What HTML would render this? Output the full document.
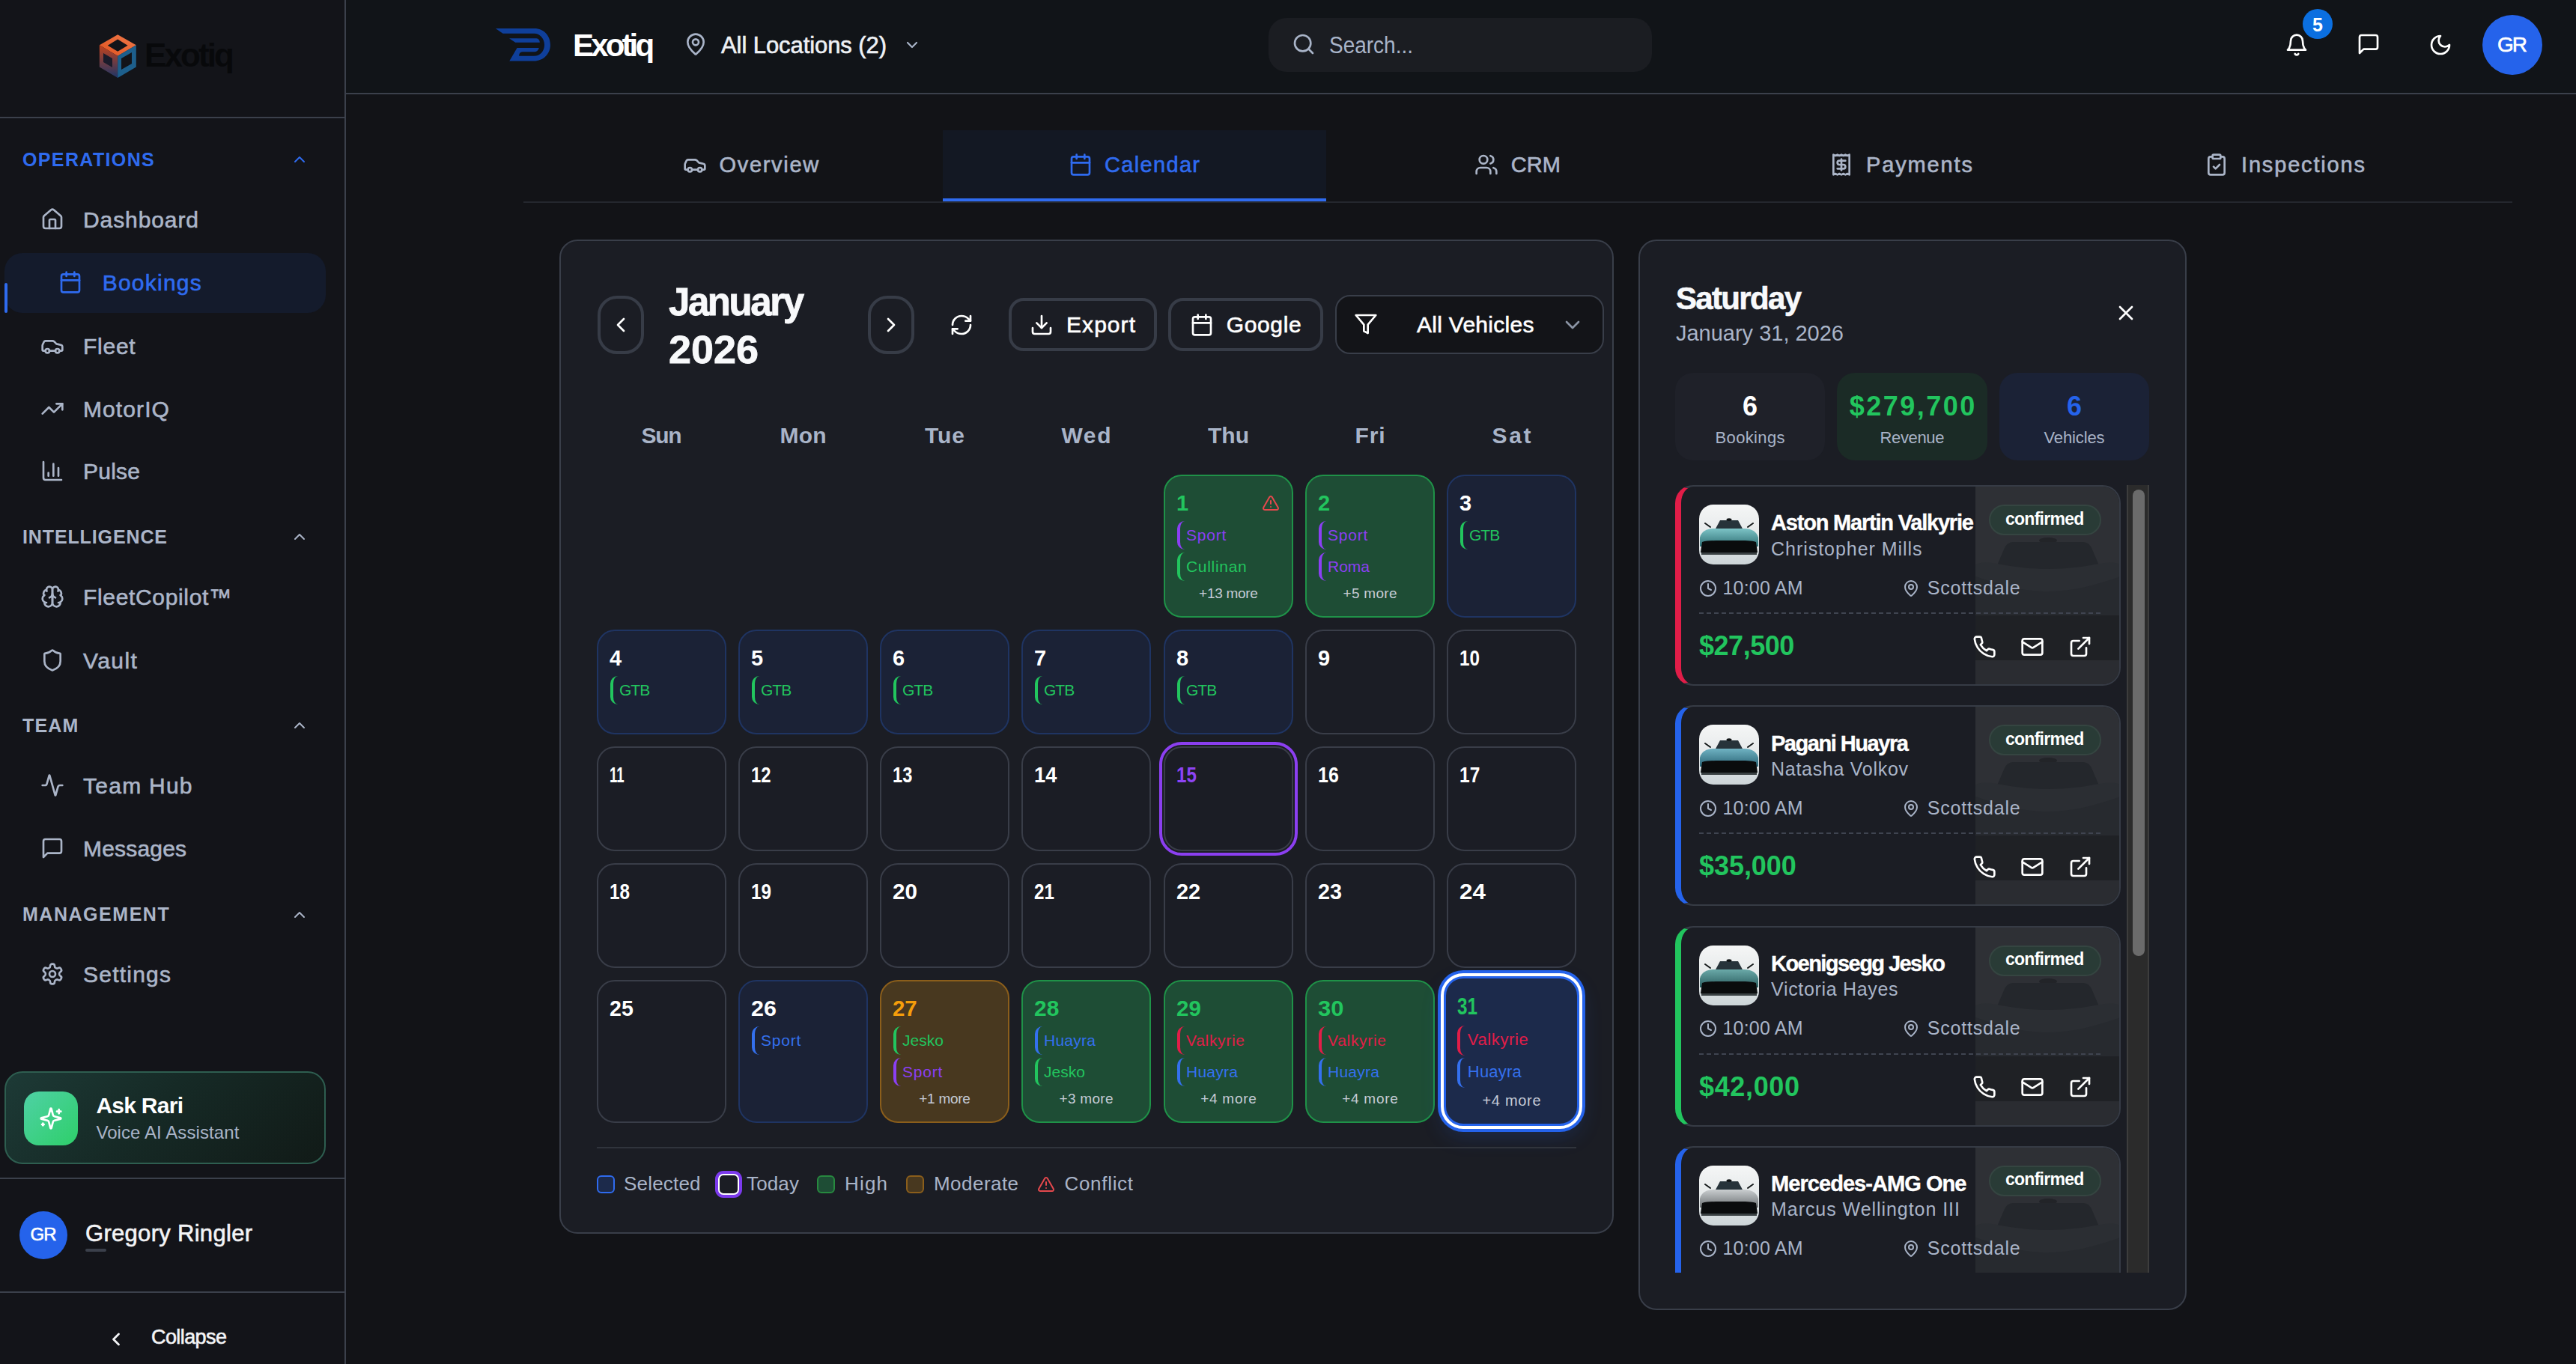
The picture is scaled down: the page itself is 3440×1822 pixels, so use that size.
<!DOCTYPE html>
<html><head><meta charset="utf-8">
<style>
*{box-sizing:border-box;margin:0;padding:0}
html,body{width:3440px;height:1822px;overflow:hidden;background:#121317;font-family:"Liberation Sans",sans-serif;color:#f3f4f6;position:relative}
.abs{position:absolute}
svg{position:absolute;fill:none;stroke:currentColor;stroke-linecap:round;stroke-linejoin:round}
.t{position:absolute;white-space:nowrap;line-height:1}
</style></head><body>
<div class="abs" style="left:0;top:0;width:462px;height:1822px;background:#131419;border-right:2px solid #3b404b"></div>
<svg style="left:130px;top:44px;width:56px;height:62px;stroke:none" viewBox="130 44 56 62">
<defs>
<linearGradient id="cgl" x1="0" y1="0" x2="0" y2="1"><stop offset="0" stop-color="#c2421d"/><stop offset="1" stop-color="#1e3566"/></linearGradient>
<linearGradient id="cgt" x1="0" y1="1" x2="1" y2="0"><stop offset="0" stop-color="#e0521f"/><stop offset="1" stop-color="#f07a4a"/></linearGradient>
</defs>
<polygon points="157.2,46.2 181.8,60.3 157.2,74.7 132.8,60.3" fill="url(#cgt)"/>
<polygon points="157.2,52.5 170.5,60.8 157.2,68.8 143.8,60.8" fill="#131419"/>
<polygon points="132.8,60.3 157.2,74.7 157.2,103.9 132.8,89.5" fill="url(#cgl)"/>
<polygon points="157.2,74.7 181.8,60.3 181.8,89.5 157.2,103.9" fill="#1d5f8c"/>
<polygon points="162,78 176,70 176,85 162,93" fill="#131419"/>
<polygon points="138,71 150,78 150,90 138,83" fill="#1a1b2a"/>
</svg>
<div class="t " style="left:193.0px;top:52.3px;font-size:44px;color:#08090b;font-weight:bold;letter-spacing:-2.90px;">Exotiq</div>
<div class="abs" style="left:0px;top:156px;width:460px;height:2px;background:#3b404b"></div>
<div class="t " style="left:30.0px;top:200.5px;font-size:25px;color:#2f6bef;font-weight:bold;letter-spacing:1.37px;">OPERATIONS</div>
<svg style="left:388px;top:200.7px;width:24px;height:24px;color:#2f6bef;" viewBox="0 0 24 24" stroke-width="2"><path d="m18 15-6-6-6 6"/></svg>
<div class="t " style="left:30.0px;top:704.8px;font-size:25px;color:#abb5c8;font-weight:bold;letter-spacing:0.88px;">INTELLIGENCE</div>
<svg style="left:388px;top:705px;width:24px;height:24px;color:#abb5c8;" viewBox="0 0 24 24" stroke-width="2"><path d="m18 15-6-6-6 6"/></svg>
<div class="t " style="left:30.0px;top:956.8px;font-size:25px;color:#abb5c8;font-weight:bold;letter-spacing:1.20px;">TEAM</div>
<svg style="left:388px;top:957px;width:24px;height:24px;color:#abb5c8;" viewBox="0 0 24 24" stroke-width="2"><path d="m18 15-6-6-6 6"/></svg>
<div class="t " style="left:30.0px;top:1209.4px;font-size:25px;color:#abb5c8;font-weight:bold;letter-spacing:1.53px;">MANAGEMENT</div>
<svg style="left:388px;top:1209.6px;width:24px;height:24px;color:#abb5c8;" viewBox="0 0 24 24" stroke-width="2"><path d="m18 15-6-6-6 6"/></svg>
<div class="abs" style="left:6px;top:338px;width:429px;height:80px;background:#141b2c;border-radius:24px"></div>
<div class="abs" style="left:6px;top:378px;width:4px;height:40px;background:#2f6bef;border-radius:2px"></div>
<svg style="left:54px;top:276.5px;width:32px;height:32px;color:#abb5c8;" viewBox="0 0 24 24" stroke-width="2"><path d="M15 21v-8a1 1 0 0 0-1-1h-4a1 1 0 0 0-1 1v8"/><path d="M3 10a2 2 0 0 1 .709-1.528l7-5.999a2 2 0 0 1 2.582 0l7 5.999A2 2 0 0 1 21 10v9a2 2 0 0 1-2 2H5a2 2 0 0 1-2-2z"/></svg>
<div class="t " style="left:111.0px;top:278.6px;font-size:30px;color:#abb5c8;letter-spacing:0.90px;-webkit-text-stroke:0.6px currentColor;">Dashboard</div>
<svg style="left:78px;top:360.5px;width:32px;height:32px;color:#2f6bef;" viewBox="0 0 24 24" stroke-width="2"><path d="M8 2v4"/><path d="M16 2v4"/><rect width="18" height="18" x="3" y="4" rx="2"/><path d="M3 10h18"/></svg>
<div class="t " style="left:136.7px;top:362.6px;font-size:30px;color:#2f6bef;letter-spacing:1.23px;-webkit-text-stroke:0.6px currentColor;">Bookings</div>
<svg style="left:54px;top:445.5px;width:32px;height:32px;color:#abb5c8;" viewBox="0 0 24 24" stroke-width="2"><path d="M19 17h2c.6 0 1-.4 1-1v-3c0-.9-.7-1.7-1.5-1.9C18.7 10.6 16 10 16 10s-1.3-1.4-2.2-2.3c-.5-.4-1.1-.7-1.8-.7H5c-.6 0-1.1.4-1.4.9l-1.4 2.9A3.7 3.7 0 0 0 2 12v4c0 .6.4 1 1 1h2"/><circle cx="7" cy="17" r="2"/><path d="M9 17h6"/><circle cx="17" cy="17" r="2"/></svg>
<div class="t " style="left:111.0px;top:447.6px;font-size:30px;color:#abb5c8;letter-spacing:0.75px;-webkit-text-stroke:0.6px currentColor;">Fleet</div>
<svg style="left:54px;top:529.5px;width:32px;height:32px;color:#abb5c8;" viewBox="0 0 24 24" stroke-width="2"><polyline points="22 7 13.5 15.5 8.5 10.5 2 17"/><polyline points="16 7 22 7 22 13"/></svg>
<div class="t " style="left:111.0px;top:531.6px;font-size:30px;color:#abb5c8;letter-spacing:1.10px;-webkit-text-stroke:0.6px currentColor;">MotorIQ</div>
<svg style="left:54px;top:612.5px;width:32px;height:32px;color:#abb5c8;" viewBox="0 0 24 24" stroke-width="2"><path d="M3 3v16a2 2 0 0 0 2 2h16"/><path d="M18 17V9"/><path d="M13 17V5"/><path d="M8 17v-3"/></svg>
<div class="t " style="left:111.0px;top:614.6px;font-size:30px;color:#abb5c8;letter-spacing:0.25px;-webkit-text-stroke:0.6px currentColor;">Pulse</div>
<svg style="left:54px;top:781.2px;width:32px;height:32px;color:#abb5c8;" viewBox="0 0 24 24" stroke-width="2"><path d="M12 5a3 3 0 1 0-5.997.125 4 4 0 0 0-2.526 5.77 4 4 0 0 0 .556 6.588A4 4 0 1 0 12 18Z"/><path d="M12 5a3 3 0 1 1 5.997.125 4 4 0 0 1 2.526 5.77 4 4 0 0 1-.556 6.588A4 4 0 1 1 12 18Z"/><path d="M15 13a4.5 4.5 0 0 1-3-4 4.5 4.5 0 0 1-3 4"/><path d="M17.599 6.5a3 3 0 0 0 .399-1.375"/><path d="M6.003 5.125A3 3 0 0 0 6.401 6.5"/><path d="M3.477 10.896a4 4 0 0 1 .585-.396"/><path d="M19.938 10.5a4 4 0 0 1 .585.396"/><path d="M6 18a4 4 0 0 1-1.967-.516"/><path d="M19.967 17.484A4 4 0 0 1 18 18"/></svg>
<div class="t " style="left:111.0px;top:783.3px;font-size:30px;color:#abb5c8;letter-spacing:0.66px;-webkit-text-stroke:0.6px currentColor;">FleetCopilot™</div>
<svg style="left:54px;top:865.5px;width:32px;height:32px;color:#abb5c8;" viewBox="0 0 24 24" stroke-width="2"><path d="M20 13c0 5-3.5 7.5-7.66 8.95a1 1 0 0 1-.67-.01C7.5 20.5 4 18 4 13V6a1 1 0 0 1 1-1c2 0 4.5-1.2 6.24-2.72a1.17 1.17 0 0 1 1.52 0C14.51 3.81 17 5 19 5a1 1 0 0 1 1 1z"/></svg>
<div class="t " style="left:111.0px;top:867.6px;font-size:30px;color:#abb5c8;letter-spacing:1.45px;-webkit-text-stroke:0.6px currentColor;">Vault</div>
<svg style="left:54px;top:1033.1px;width:32px;height:32px;color:#abb5c8;" viewBox="0 0 24 24" stroke-width="2"><path d="M22 12h-2.48a2 2 0 0 0-1.93 1.46l-2.35 8.36a.25.25 0 0 1-.48 0L9.24 2.18a.25.25 0 0 0-.48 0l-2.35 8.36A2 2 0 0 1 4.49 12H2"/></svg>
<div class="t " style="left:111.0px;top:1035.2px;font-size:30px;color:#abb5c8;letter-spacing:1.26px;-webkit-text-stroke:0.6px currentColor;">Team Hub</div>
<svg style="left:54px;top:1117.0px;width:32px;height:32px;color:#abb5c8;" viewBox="0 0 24 24" stroke-width="2"><path d="M21 15a2 2 0 0 1-2 2H7l-4 4V5a2 2 0 0 1 2-2h14a2 2 0 0 1 2 2z"/></svg>
<div class="t " style="left:111.0px;top:1119.1px;font-size:30px;color:#abb5c8;letter-spacing:0.19px;-webkit-text-stroke:0.6px currentColor;">Messages</div>
<svg style="left:54px;top:1284.9px;width:32px;height:32px;color:#abb5c8;" viewBox="0 0 24 24" stroke-width="2"><path d="M12.22 2h-.44a2 2 0 0 0-2 2v.18a2 2 0 0 1-1 1.73l-.43.25a2 2 0 0 1-2 0l-.15-.08a2 2 0 0 0-2.73.73l-.22.38a2 2 0 0 0 .73 2.73l.15.1a2 2 0 0 1 1 1.72v.51a2 2 0 0 1-1 1.74l-.15.09a2 2 0 0 0-.73 2.73l.22.38a2 2 0 0 0 2.730.73l.15-.08a2 2 0 0 1 2 0l.43.25a2 2 0 0 1 1 1.73V20a2 2 0 0 0 2 2h.44a2 2 0 0 0 2-2v-.18a2 2 0 0 1 1-1.73l.43-.25a2 2 0 0 1 2 0l.15.08a2 2 0 0 0 2.73-.73l.22-.39a2 2 0 0 0-.73-2.73l-.15-.08a2 2 0 0 1-1-1.74v-.5a2 2 0 0 1 1-1.74l.15-.09a2 2 0 0 0 .73-2.73l-.22-.38a2 2 0 0 0-2.73-.73l-.15.08a2 2 0 0 1-2 0l-.43-.25a2 2 0 0 1-1-1.73V4a2 2 0 0 0-2-2z"/><circle cx="12" cy="12" r="3"/></svg>
<div class="t " style="left:111.0px;top:1287.0px;font-size:30px;color:#abb5c8;letter-spacing:1.23px;-webkit-text-stroke:0.6px currentColor;">Settings</div>
<div class="abs" style="left:6px;top:1431px;width:429px;height:124px;background:linear-gradient(135deg,#1d3a36 0%,#162a26 45%,#111a17 100%);border:2px solid #2e5e50;border-radius:24px"></div>
<div class="abs" style="left:32px;top:1458px;width:72px;height:72px;background:linear-gradient(135deg,#4fd1a5 0%,#2ecf6a 100%);border-radius:20px"></div>
<svg style="left:52px;top:1477.5px;width:32px;height:32px;color:#ffffff;" viewBox="0 0 24 24" stroke-width="2"><path d="M9.937 15.5A2 2 0 0 0 8.5 14.063l-6.135-1.582a.5.5 0 0 1 0-.962L8.5 9.936A2 2 0 0 0 9.937 8.5l1.582-6.135a.5.5 0 0 1 .963 0L14.063 8.5A2 2 0 0 0 15.5 9.937l6.135 1.581a.5.5 0 0 1 0 .964L15.5 14.063a2 2 0 0 0-1.437 1.437l-1.582 6.135a.5.5 0 0 1-.963 0z"/><path d="M20 3v4"/><path d="M22 5h-4"/><path d="M4 17v2"/><path d="M5 18H3"/></svg>
<div class="t " style="left:128.4px;top:1462.1px;font-size:30px;color:#ffffff;font-weight:bold;letter-spacing:-0.73px;">Ask Rari</div>
<div class="t " style="left:128.4px;top:1500.7px;font-size:24px;color:#a9b4c8;letter-spacing:0.09px;">Voice AI Assistant</div>
<div class="abs" style="left:0px;top:1573px;width:460px;height:2px;background:#3b404b"></div>
<div class="abs" style="left:26px;top:1618px;width:64px;height:64px;background:#2563eb;border-radius:50%"></div>
<div class="t " style="left:40.5px;top:1637.3px;font-size:24px;color:#ffffff;letter-spacing:-1.00px;-webkit-text-stroke:0.6px currentColor;">GR</div>
<div class="t " style="left:114.0px;top:1632.3px;font-size:31px;color:#f3f4f6;letter-spacing:0.30px;-webkit-text-stroke:0.6px currentColor;">Gregory Ringler</div>
<div class="abs" style="left:114px;top:1668px;width:28px;height:4px;background:#3b404b;border-radius:2px"></div>
<div class="abs" style="left:0px;top:1725px;width:460px;height:2px;background:#3b404b"></div>
<svg style="left:140.6px;top:1774.5px;width:28px;height:28px;color:#f3f4f6;" viewBox="0 0 24 24" stroke-width="2.4"><path d="m15 18-6-6 6-6"/></svg>
<div class="t " style="left:202.0px;top:1773.1px;font-size:27px;color:#f3f4f6;letter-spacing:-0.59px;-webkit-text-stroke:0.6px currentColor;">Collapse</div>
<div class="abs" style="left:462px;top:0;width:2978px;height:126px;background:#111418;border-bottom:2px solid #3b404b"></div>
<svg style="left:655px;top:34px;width:86px;height:52px;stroke:none" viewBox="655 34 86 52">
<path fill-rule="evenodd" fill="#0f3f9a" d="M661.8 38.1 L713.6 38.1 C726.5 38.1 734.9 48 734.9 59.9 C734.9 72 725.5 81.4 713 81.4 L680.3 81.4 L690.5 64 L719.8 64 C718.8 67.5 716.5 69.2 713.5 69.2 L697.5 69.2 C694.5 69.2 693.2 72 693.2 74.8 L713 74.8 C721.5 74.8 727 68 727 59.9 C727 51 720.5 44.75 713.5 44.75 L671.5 44.75 Z"/>
<path fill="#0f3f9a" d="M680 51.2 L716.5 51.2 C719 51.2 720.8 54 720.8 56.8 L688.2 56.8 Z"/>
</svg>
<div class="t " style="left:765.0px;top:40.1px;font-size:42px;color:#ffffff;font-weight:bold;letter-spacing:-3.86px;">Exotiq</div>
<svg style="left:913px;top:43px;width:32px;height:32px;color:#a9b4c8;" viewBox="0 0 24 24" stroke-width="2"><path d="M20 10c0 4.993-5.539 10.193-7.399 11.799a1 1 0 0 1-1.202 0C9.539 20.193 4 14.993 4 10a8 8 0 0 1 16 0"/><circle cx="12" cy="10" r="3"/></svg>
<div class="t " style="left:963.0px;top:44.5px;font-size:31px;color:#eef1f5;letter-spacing:-0.08px;-webkit-text-stroke:0.6px currentColor;">All Locations (2)</div>
<svg style="left:1206px;top:48px;width:24px;height:24px;color:#a9b4c8;" viewBox="0 0 24 24" stroke-width="2.2"><path d="m6 9 6 6 6-6"/></svg>
<div class="abs" style="left:1694px;top:24px;width:512px;height:72px;background:#1b1d22;border-radius:24px"></div>
<svg style="left:1725px;top:43px;width:32px;height:32px;color:#a9b4c8;" viewBox="0 0 24 24" stroke-width="2"><circle cx="11" cy="11" r="8"/><path d="m21 21-4.3-4.3"/></svg>
<div class="t " style="left:1775.0px;top:44.6px;font-size:31px;color:#a9b4c8;transform:scaleX(0.9025);transform-origin:0.0px 0;">Search...</div>
<svg style="left:3051px;top:44px;width:32px;height:32px;color:#ffffff;" viewBox="0 0 24 24" stroke-width="2"><path d="M6 8a6 6 0 0 1 12 0c0 7 3 9 3 9H3s3-2 3-9"/><path d="M10.3 21a1.94 1.94 0 0 0 3.4 0"/></svg>
<div class="abs" style="left:3075px;top:12px;width:40px;height:40px;background:#0b6fe0;border-radius:50%"></div>
<div class="t " style="left:3088.1px;top:20.8px;font-size:25px;color:#ffffff;font-weight:bold;">5</div>
<svg style="left:3147px;top:43px;width:32px;height:32px;color:#ffffff;" viewBox="0 0 24 24" stroke-width="2"><path d="M21 15a2 2 0 0 1-2 2H7l-4 4V5a2 2 0 0 1 2-2h14a2 2 0 0 1 2 2z"/></svg>
<svg style="left:3243px;top:44px;width:32px;height:32px;color:#ffffff;" viewBox="0 0 24 24" stroke-width="2"><path d="M12 3a6 6 0 0 0 9 9 9 9 0 1 1-9-9Z"/></svg>
<div class="abs" style="left:3315px;top:20px;width:80px;height:80px;background:#2563eb;border-radius:50%"></div>
<div class="t " style="left:3335.0px;top:46.2px;font-size:28px;color:#ffffff;letter-spacing:-2.00px;-webkit-text-stroke:0.6px currentColor;">GR</div>
<div class="abs" style="left:699px;top:269px;width:2656px;height:2px;background:#24272e"></div>
<div class="abs" style="left:1259px;top:174px;width:512px;height:95px;background:#131823"></div>
<div class="abs" style="left:1259px;top:265px;width:512px;height:4px;background:#2f6bef"></div>
<svg style="left:912px;top:204px;width:32px;height:32px;color:#abb5c8;" viewBox="0 0 24 24" stroke-width="2"><path d="M19 17h2c.6 0 1-.4 1-1v-3c0-.9-.7-1.7-1.5-1.9C18.7 10.6 16 10 16 10s-1.3-1.4-2.2-2.3c-.5-.4-1.1-.7-1.8-.7H5c-.6 0-1.1.4-1.4.9l-1.4 2.9A3.7 3.7 0 0 0 2 12v4c0 .6.4 1 1 1h2"/><circle cx="7" cy="17" r="2"/><path d="M9 17h6"/><circle cx="17" cy="17" r="2"/></svg>
<div class="t " style="left:960.5px;top:206.0px;font-size:29px;color:#abb5c8;letter-spacing:1.69px;-webkit-text-stroke:0.6px currentColor;">Overview</div>
<svg style="left:1427px;top:204px;width:32px;height:32px;color:#2f6bef;" viewBox="0 0 24 24" stroke-width="2"><path d="M8 2v4"/><path d="M16 2v4"/><rect width="18" height="18" x="3" y="4" rx="2"/><path d="M3 10h18"/></svg>
<div class="t " style="left:1475.0px;top:206.0px;font-size:29px;color:#2f6bef;letter-spacing:1.33px;-webkit-text-stroke:0.6px currentColor;">Calendar</div>
<svg style="left:1969px;top:204px;width:32px;height:32px;color:#abb5c8;" viewBox="0 0 24 24" stroke-width="2"><path d="M16 21v-2a4 4 0 0 0-4-4H6a4 4 0 0 0-4 4v2"/><circle cx="9" cy="7" r="4"/><path d="M22 21v-2a4 4 0 0 0-3-3.87"/><path d="M16 3.13a4 4 0 0 1 0 7.75"/></svg>
<div class="t " style="left:2017.7px;top:206.0px;font-size:29px;color:#abb5c8;letter-spacing:0.15px;-webkit-text-stroke:0.6px currentColor;">CRM</div>
<svg style="left:2443px;top:204px;width:32px;height:32px;color:#abb5c8;" viewBox="0 0 24 24" stroke-width="2"><path d="M4 2v20l2-1 2 1 2-1 2 1 2-1 2 1 2-1 2 1V2l-2 1-2-1-2 1-2-1-2 1-2-1-2 1Z"/><path d="M16 8h-6a2 2 0 1 0 0 4h4a2 2 0 1 1 0 4H8"/><path d="M12 17.5v-11"/></svg>
<div class="t " style="left:2492.0px;top:206.0px;font-size:29px;color:#abb5c8;letter-spacing:1.87px;-webkit-text-stroke:0.6px currentColor;">Payments</div>
<svg style="left:2944px;top:204px;width:32px;height:32px;color:#abb5c8;" viewBox="0 0 24 24" stroke-width="2"><rect width="8" height="4" x="8" y="2" rx="1" ry="1"/><path d="M16 4h2a2 2 0 0 1 2 2v14a2 2 0 0 1-2 2H6a2 2 0 0 1-2-2V6a2 2 0 0 1 2-2h2"/><path d="m9 14 2 2 4-4"/></svg>
<div class="t " style="left:2993.0px;top:206.0px;font-size:29px;color:#abb5c8;letter-spacing:1.83px;-webkit-text-stroke:0.6px currentColor;">Inspections</div>
<div class="abs" style="left:747px;top:320px;width:1408px;height:1328px;background:#1b1d24;border:2px solid #393e49;border-radius:24px"></div>
<div class="abs" style="left:797.5px;top:395px;width:62px;height:78px;border:4px solid #373c47;border-radius:26px"></div>
<svg style="left:812.5px;top:418px;width:32px;height:32px;color:#ffffff;" viewBox="0 0 24 24" stroke-width="2"><path d="m15 18-6-6 6-6"/></svg>
<div class="abs" style="left:1159px;top:395px;width:62px;height:78px;border:4px solid #373c47;border-radius:26px"></div>
<svg style="left:1174px;top:418px;width:32px;height:32px;color:#ffffff;" viewBox="0 0 24 24" stroke-width="2"><path d="m9 18 6-6-6-6"/></svg>
<div class="t " style="left:893.0px;top:377.8px;font-size:51px;color:#f8f9fb;font-weight:bold;letter-spacing:-2.43px;-webkit-text-stroke:0.8px currentColor;">January</div>
<div class="t " style="left:893.0px;top:442.3px;font-size:51px;color:#f8f9fb;font-weight:bold;transform:scaleX(1.0573);transform-origin:0.0px 0;-webkit-text-stroke:0.8px currentColor;">2026</div>
<svg style="left:1267.5px;top:418px;width:32px;height:32px;color:#ffffff;" viewBox="0 0 24 24" stroke-width="2"><path d="M3 12a9 9 0 0 1 9-9 9.75 9.75 0 0 1 6.74 2.74L21 8"/><path d="M21 3v5h-5"/><path d="M21 12a9 9 0 0 1-9 9 9.75 9.75 0 0 1-6.74-2.74L3 16"/><path d="M8 16H3v5"/></svg>
<div class="abs" style="left:1347px;top:398px;width:198px;height:71px;border:4px solid #373c47;border-radius:20px"></div>
<svg style="left:1375px;top:417.5px;width:32px;height:32px;color:#ffffff;" viewBox="0 0 24 24" stroke-width="2"><path d="M21 15v4a2 2 0 0 1-2 2H5a2 2 0 0 1-2-2v-4"/><polyline points="7 10 12 15 17 10"/><line x1="12" x2="12" y1="15" y2="3"/></svg>
<div class="t " style="left:1424.0px;top:419.3px;font-size:30px;color:#ffffff;letter-spacing:1.06px;-webkit-text-stroke:0.6px currentColor;">Export</div>
<div class="abs" style="left:1560px;top:398px;width:207px;height:71px;border:4px solid #373c47;border-radius:20px"></div>
<svg style="left:1589px;top:417.5px;width:32px;height:32px;color:#ffffff;" viewBox="0 0 24 24" stroke-width="2"><path d="M8 2v4"/><path d="M16 2v4"/><rect width="18" height="18" x="3" y="4" rx="2"/><path d="M3 10h18"/></svg>
<div class="t " style="left:1637.7px;top:419.3px;font-size:30px;color:#ffffff;letter-spacing:0.66px;-webkit-text-stroke:0.6px currentColor;">Google</div>
<div class="abs" style="left:1783px;top:394px;width:359px;height:79px;background:#131418;border:2px solid #393e49;border-radius:20px"></div>
<svg style="left:1807.7px;top:417px;width:32px;height:32px;color:#ffffff;" viewBox="0 0 24 24" stroke-width="2"><polygon points="22 3 2 3 10 12.46 10 19 14 21 14 12.46 22 3"/></svg>
<div class="t " style="left:1892.0px;top:419.3px;font-size:30px;color:#ffffff;letter-spacing:0.27px;-webkit-text-stroke:0.6px currentColor;">All Vehicles</div>
<svg style="left:2083.5px;top:418px;width:32px;height:32px;color:#8a93a3;" viewBox="0 0 24 24" stroke-width="2"><path d="m6 9 6 6 6-6"/></svg>
<div class="t " style="left:856.5px;top:566.6px;font-size:30px;color:#a9b4c8;font-weight:bold;letter-spacing:-1.35px;">Sun</div>
<div class="t " style="left:1041.5px;top:566.6px;font-size:30px;color:#a9b4c8;font-weight:bold;letter-spacing:0.20px;">Mon</div>
<div class="t " style="left:1235.0px;top:566.6px;font-size:30px;color:#a9b4c8;font-weight:bold;letter-spacing:0.95px;">Tue</div>
<div class="t " style="left:1417.5px;top:566.6px;font-size:30px;color:#a9b4c8;font-weight:bold;letter-spacing:1.60px;">Wed</div>
<div class="t " style="left:1613.0px;top:566.6px;font-size:30px;color:#a9b4c8;font-weight:bold;">Thu</div>
<div class="t " style="left:1809.5px;top:566.6px;font-size:30px;color:#a9b4c8;font-weight:bold;letter-spacing:0.85px;">Fri</div>
<div class="t " style="left:1992.5px;top:566.6px;font-size:30px;color:#a9b4c8;font-weight:bold;letter-spacing:2.65px;">Sat</div>
<div class="abs" style="left:1554px;top:634px;width:173px;height:191px;background:#1e4d35;border:2px solid #1f9248;border-radius:24px"></div>
<div class="t " style="left:1571.0px;top:657.5px;font-size:29px;color:#22c55e;font-weight:bold;">1</div>
<div class="abs" style="left:1572px;top:696px;width:12px;height:38px;border-left:4px solid #8b3ff3;border-radius:10px 0 0 10px"></div>
<div class="t " style="left:1584.0px;top:704.2px;font-size:21px;color:#8b3ff3;letter-spacing:0.80px;">Sport</div>
<div class="abs" style="left:1572px;top:738px;width:12px;height:38px;border-left:4px solid #22c55e;border-radius:10px 0 0 10px"></div>
<div class="t " style="left:1584.0px;top:746.2px;font-size:21px;color:#22c55e;letter-spacing:0.70px;">Cullinan</div>
<div class="t " style="left:1601.1px;top:782.5px;font-size:19px;color:#c5cbd6;letter-spacing:-0.29px;">+13 more</div>
<svg style="left:1684.7px;top:660px;width:24px;height:24px;color:#e5484d;" viewBox="0 0 24 24" stroke-width="2"><path d="m21.73 18-8-14a2 2 0 0 0-3.48 0l-8 14A2 2 0 0 0 4 21h16a2 2 0 0 0 1.73-3"/><path d="M12 9v4"/><path d="M12 17h.01"/></svg>
<div class="abs" style="left:1743px;top:634px;width:173px;height:191px;background:#1e4d35;border:2px solid #1f9248;border-radius:24px"></div>
<div class="t " style="left:1760.0px;top:657.5px;font-size:29px;color:#22c55e;font-weight:bold;">2</div>
<div class="abs" style="left:1761px;top:696px;width:12px;height:38px;border-left:4px solid #8b3ff3;border-radius:10px 0 0 10px"></div>
<div class="t " style="left:1773.0px;top:704.2px;font-size:21px;color:#8b3ff3;letter-spacing:0.80px;">Sport</div>
<div class="abs" style="left:1761px;top:738px;width:12px;height:38px;border-left:4px solid #8b3ff3;border-radius:10px 0 0 10px"></div>
<div class="t " style="left:1773.0px;top:746.2px;font-size:21px;color:#8b3ff3;">Roma</div>
<div class="t " style="left:1793.5px;top:782.5px;font-size:19px;color:#c5cbd6;letter-spacing:0.30px;">+5 more</div>
<div class="abs" style="left:1932px;top:634px;width:173px;height:191px;background:#1b2236;border:2px solid #1f3462;border-radius:24px"></div>
<div class="t " style="left:1949.0px;top:657.5px;font-size:29px;color:#ffffff;font-weight:bold;">3</div>
<div class="abs" style="left:1950px;top:696px;width:12px;height:38px;border-left:4px solid #22c55e;border-radius:10px 0 0 10px"></div>
<div class="t " style="left:1962.0px;top:704.2px;font-size:21px;color:#22c55e;letter-spacing:-1.00px;">GTB</div>
<div class="abs" style="left:797px;top:841px;width:173px;height:140px;background:#1b2236;border:2px solid #1f3462;border-radius:24px"></div>
<div class="t " style="left:814.0px;top:864.5px;font-size:29px;color:#ffffff;font-weight:bold;">4</div>
<div class="abs" style="left:815px;top:903px;width:12px;height:38px;border-left:4px solid #22c55e;border-radius:10px 0 0 10px"></div>
<div class="t " style="left:827.0px;top:911.2px;font-size:21px;color:#22c55e;letter-spacing:-1.00px;">GTB</div>
<div class="abs" style="left:986px;top:841px;width:173px;height:140px;background:#1b2236;border:2px solid #1f3462;border-radius:24px"></div>
<div class="t " style="left:1003.0px;top:864.5px;font-size:29px;color:#ffffff;font-weight:bold;">5</div>
<div class="abs" style="left:1004px;top:903px;width:12px;height:38px;border-left:4px solid #22c55e;border-radius:10px 0 0 10px"></div>
<div class="t " style="left:1016.0px;top:911.2px;font-size:21px;color:#22c55e;letter-spacing:-1.00px;">GTB</div>
<div class="abs" style="left:1175px;top:841px;width:173px;height:140px;background:#1b2236;border:2px solid #1f3462;border-radius:24px"></div>
<div class="t " style="left:1192.0px;top:864.5px;font-size:29px;color:#ffffff;font-weight:bold;">6</div>
<div class="abs" style="left:1193px;top:903px;width:12px;height:38px;border-left:4px solid #22c55e;border-radius:10px 0 0 10px"></div>
<div class="t " style="left:1205.0px;top:911.2px;font-size:21px;color:#22c55e;letter-spacing:-1.00px;">GTB</div>
<div class="abs" style="left:1364px;top:841px;width:173px;height:140px;background:#1b2236;border:2px solid #1f3462;border-radius:24px"></div>
<div class="t " style="left:1381.0px;top:864.5px;font-size:29px;color:#ffffff;font-weight:bold;">7</div>
<div class="abs" style="left:1382px;top:903px;width:12px;height:38px;border-left:4px solid #22c55e;border-radius:10px 0 0 10px"></div>
<div class="t " style="left:1394.0px;top:911.2px;font-size:21px;color:#22c55e;letter-spacing:-1.00px;">GTB</div>
<div class="abs" style="left:1554px;top:841px;width:173px;height:140px;background:#1b2236;border:2px solid #1f3462;border-radius:24px"></div>
<div class="t " style="left:1571.0px;top:864.5px;font-size:29px;color:#ffffff;font-weight:bold;">8</div>
<div class="abs" style="left:1572px;top:903px;width:12px;height:38px;border-left:4px solid #22c55e;border-radius:10px 0 0 10px"></div>
<div class="t " style="left:1584.0px;top:911.2px;font-size:21px;color:#22c55e;letter-spacing:-1.00px;">GTB</div>
<div class="abs" style="left:1743px;top:841px;width:173px;height:140px;background:#1b1d25;border:2px solid #393d48;border-radius:24px"></div>
<div class="t " style="left:1760.0px;top:864.5px;font-size:29px;color:#ffffff;font-weight:bold;">9</div>
<div class="abs" style="left:1932px;top:841px;width:173px;height:140px;background:#1b1d25;border:2px solid #393d48;border-radius:24px"></div>
<div class="t " style="left:1949.0px;top:864.5px;font-size:29px;color:#ffffff;font-weight:bold;transform:scaleX(0.8359);transform-origin:0.0px 0;">10</div>
<div class="abs" style="left:797px;top:997px;width:173px;height:140px;background:#1b1d25;border:2px solid #393d48;border-radius:24px"></div>
<div class="t " style="left:814.0px;top:1020.5px;font-size:29px;color:#ffffff;font-weight:bold;transform:scaleX(0.6417);transform-origin:0.0px 0;">11</div>
<div class="abs" style="left:986px;top:997px;width:173px;height:140px;background:#1b1d25;border:2px solid #393d48;border-radius:24px"></div>
<div class="t " style="left:1003.0px;top:1020.5px;font-size:29px;color:#ffffff;font-weight:bold;transform:scaleX(0.8235);transform-origin:0.0px 0;">12</div>
<div class="abs" style="left:1175px;top:997px;width:173px;height:140px;background:#1b1d25;border:2px solid #393d48;border-radius:24px"></div>
<div class="t " style="left:1192.0px;top:1020.5px;font-size:29px;color:#ffffff;font-weight:bold;transform:scaleX(0.8142);transform-origin:0.0px 0;">13</div>
<div class="abs" style="left:1364px;top:997px;width:173px;height:140px;background:#1b1d25;border:2px solid #393d48;border-radius:24px"></div>
<div class="t " style="left:1381.0px;top:1020.5px;font-size:29px;color:#ffffff;font-weight:bold;transform:scaleX(0.9381);transform-origin:0.0px 0;">14</div>
<div class="abs" style="left:1548px;top:991px;width:185px;height:152px;border:4px solid #8b3ff0;border-radius:30px"></div>
<div class="abs" style="left:1554px;top:997px;width:173px;height:140px;background:#1b1d25;border:2px solid #393d48;border-radius:24px"></div>
<div class="t " style="left:1571.0px;top:1020.5px;font-size:29px;color:#8d44f5;font-weight:bold;transform:scaleX(0.8328);transform-origin:0.0px 0;">15</div>
<div class="abs" style="left:1743px;top:997px;width:173px;height:140px;background:#1b1d25;border:2px solid #393d48;border-radius:24px"></div>
<div class="t " style="left:1760.0px;top:1020.5px;font-size:29px;color:#ffffff;font-weight:bold;transform:scaleX(0.8607);transform-origin:0.0px 0;">16</div>
<div class="abs" style="left:1932px;top:997px;width:173px;height:140px;background:#1b1d25;border:2px solid #393d48;border-radius:24px"></div>
<div class="t " style="left:1949.0px;top:1020.5px;font-size:29px;color:#ffffff;font-weight:bold;transform:scaleX(0.8452);transform-origin:0.0px 0;">17</div>
<div class="abs" style="left:797px;top:1153px;width:173px;height:140px;background:#1b1d25;border:2px solid #393d48;border-radius:24px"></div>
<div class="t " style="left:814.0px;top:1176.5px;font-size:29px;color:#ffffff;font-weight:bold;transform:scaleX(0.8359);transform-origin:0.0px 0;">18</div>
<div class="abs" style="left:986px;top:1153px;width:173px;height:140px;background:#1b1d25;border:2px solid #393d48;border-radius:24px"></div>
<div class="t " style="left:1003.0px;top:1176.5px;font-size:29px;color:#ffffff;font-weight:bold;transform:scaleX(0.8359);transform-origin:0.0px 0;">19</div>
<div class="abs" style="left:1175px;top:1153px;width:173px;height:140px;background:#1b1d25;border:2px solid #393d48;border-radius:24px"></div>
<div class="t " style="left:1192.0px;top:1176.5px;font-size:29px;color:#ffffff;font-weight:bold;transform:scaleX(1.0217);transform-origin:0.0px 0;">20</div>
<div class="abs" style="left:1364px;top:1153px;width:173px;height:140px;background:#1b1d25;border:2px solid #393d48;border-radius:24px"></div>
<div class="t " style="left:1381.0px;top:1176.5px;font-size:29px;color:#ffffff;font-weight:bold;transform:scaleX(0.8359);transform-origin:0.0px 0;">21</div>
<div class="abs" style="left:1554px;top:1153px;width:173px;height:140px;background:#1b1d25;border:2px solid #393d48;border-radius:24px"></div>
<div class="t " style="left:1571.0px;top:1176.5px;font-size:29px;color:#ffffff;font-weight:bold;transform:scaleX(0.9969);transform-origin:0.0px 0;">22</div>
<div class="abs" style="left:1743px;top:1153px;width:173px;height:140px;background:#1b1d25;border:2px solid #393d48;border-radius:24px"></div>
<div class="t " style="left:1760.0px;top:1176.5px;font-size:29px;color:#ffffff;font-weight:bold;transform:scaleX(0.9907);transform-origin:0.0px 0;">23</div>
<div class="abs" style="left:1932px;top:1153px;width:173px;height:140px;background:#1b1d25;border:2px solid #393d48;border-radius:24px"></div>
<div class="t " style="left:1949.0px;top:1176.5px;font-size:29px;color:#ffffff;font-weight:bold;transform:scaleX(1.0836);transform-origin:0.0px 0;">24</div>
<div class="abs" style="left:797px;top:1309px;width:173px;height:191px;background:#1b1d25;border:2px solid #393d48;border-radius:24px"></div>
<div class="t " style="left:814.0px;top:1332.5px;font-size:29px;color:#ffffff;font-weight:bold;transform:scaleX(0.9845);transform-origin:0.0px 0;">25</div>
<div class="abs" style="left:986px;top:1309px;width:173px;height:191px;background:#1b2236;border:2px solid #1f3462;border-radius:24px"></div>
<div class="t " style="left:1003.0px;top:1332.5px;font-size:29px;color:#ffffff;font-weight:bold;transform:scaleX(1.0495);transform-origin:0.0px 0;">26</div>
<div class="abs" style="left:1004px;top:1371px;width:12px;height:38px;border-left:4px solid #3470ee;border-radius:10px 0 0 10px"></div>
<div class="t " style="left:1016.0px;top:1379.2px;font-size:21px;color:#3470ee;letter-spacing:0.80px;">Sport</div>
<div class="abs" style="left:1175px;top:1309px;width:173px;height:191px;background:#48381f;border:2px solid #8b5e1b;border-radius:24px"></div>
<div class="t " style="left:1192.0px;top:1332.5px;font-size:29px;color:#f59e0b;font-weight:bold;transform:scaleX(1.0124);transform-origin:0.0px 0;">27</div>
<div class="abs" style="left:1193px;top:1371px;width:12px;height:38px;border-left:4px solid #22c55e;border-radius:10px 0 0 10px"></div>
<div class="t " style="left:1205.0px;top:1379.2px;font-size:21px;color:#22c55e;letter-spacing:0.03px;">Jesko</div>
<div class="abs" style="left:1193px;top:1413px;width:12px;height:38px;border-left:4px solid #8b3ff3;border-radius:10px 0 0 10px"></div>
<div class="t " style="left:1205.0px;top:1421.2px;font-size:21px;color:#8b3ff3;letter-spacing:0.80px;">Sport</div>
<div class="t " style="left:1227.2px;top:1457.5px;font-size:19px;color:#c5cbd6;letter-spacing:-0.25px;">+1 more</div>
<div class="abs" style="left:1364px;top:1309px;width:173px;height:191px;background:#1e4d35;border:2px solid #1f9248;border-radius:24px"></div>
<div class="t " style="left:1381.0px;top:1332.5px;font-size:29px;color:#22c55e;font-weight:bold;transform:scaleX(1.0310);transform-origin:0.0px 0;">28</div>
<div class="abs" style="left:1382px;top:1371px;width:12px;height:38px;border-left:4px solid #3470ee;border-radius:10px 0 0 10px"></div>
<div class="t " style="left:1394.0px;top:1379.2px;font-size:21px;color:#3470ee;letter-spacing:0.26px;">Huayra</div>
<div class="abs" style="left:1382px;top:1413px;width:12px;height:38px;border-left:4px solid #22c55e;border-radius:10px 0 0 10px"></div>
<div class="t " style="left:1394.0px;top:1421.2px;font-size:21px;color:#22c55e;letter-spacing:0.03px;">Jesko</div>
<div class="t " style="left:1414.5px;top:1457.5px;font-size:19px;color:#c5cbd6;letter-spacing:0.30px;">+3 more</div>
<div class="abs" style="left:1554px;top:1309px;width:173px;height:191px;background:#1e4d35;border:2px solid #1f9248;border-radius:24px"></div>
<div class="t " style="left:1571.0px;top:1332.5px;font-size:29px;color:#22c55e;font-weight:bold;transform:scaleX(1.0155);transform-origin:0.0px 0;">29</div>
<div class="abs" style="left:1572px;top:1371px;width:12px;height:38px;border-left:4px solid #e11d48;border-radius:10px 0 0 10px"></div>
<div class="t " style="left:1584.0px;top:1379.2px;font-size:21px;color:#e11d48;letter-spacing:0.70px;">Valkyrie</div>
<div class="abs" style="left:1572px;top:1413px;width:12px;height:38px;border-left:4px solid #3470ee;border-radius:10px 0 0 10px"></div>
<div class="t " style="left:1584.0px;top:1421.2px;font-size:21px;color:#3470ee;letter-spacing:0.26px;">Huayra</div>
<div class="t " style="left:1603.2px;top:1457.5px;font-size:19px;color:#c5cbd6;letter-spacing:0.73px;">+4 more</div>
<div class="abs" style="left:1743px;top:1309px;width:173px;height:191px;background:#1e4d35;border:2px solid #1f9248;border-radius:24px"></div>
<div class="t " style="left:1760.0px;top:1332.5px;font-size:29px;color:#22c55e;font-weight:bold;transform:scaleX(1.0650);transform-origin:0.0px 0;">30</div>
<div class="abs" style="left:1761px;top:1371px;width:12px;height:38px;border-left:4px solid #e11d48;border-radius:10px 0 0 10px"></div>
<div class="t " style="left:1773.0px;top:1379.2px;font-size:21px;color:#e11d48;letter-spacing:0.70px;">Valkyrie</div>
<div class="abs" style="left:1761px;top:1413px;width:12px;height:38px;border-left:4px solid #3470ee;border-radius:10px 0 0 10px"></div>
<div class="t " style="left:1773.0px;top:1421.2px;font-size:21px;color:#3470ee;letter-spacing:0.26px;">Huayra</div>
<div class="t " style="left:1792.2px;top:1457.5px;font-size:19px;color:#c5cbd6;letter-spacing:0.73px;">+4 more</div>
<div class="abs" style="left:1927.5px;top:1304px;width:181px;height:200px;background:#1c2a4b;border:3px solid #2563eb;border-radius:26px;box-shadow:0 0 0 4px #ffffff,0 0 0 8px #2563eb,0 12px 30px rgba(37,99,235,0.22)"></div>
<div class="t " style="left:1946.0px;top:1329.0px;font-size:31px;color:#22c55e;font-weight:bold;transform:scaleX(0.7826);transform-origin:0.0px 0;">31</div>
<div class="abs" style="left:1946px;top:1369.5px;width:12px;height:40px;border-left:4px solid #e11d48;border-radius:10px 0 0 10px"></div>
<div class="t " style="left:1959.8px;top:1378.4px;font-size:22px;color:#e11d48;letter-spacing:0.63px;">Valkyrie</div>
<div class="abs" style="left:1946px;top:1413px;width:12px;height:40px;border-left:4px solid #3470ee;border-radius:10px 0 0 10px"></div>
<div class="t " style="left:1959.8px;top:1421.4px;font-size:22px;color:#3470ee;letter-spacing:0.20px;">Huayra</div>
<div class="t " style="left:1979.5px;top:1459.7px;font-size:20px;color:#c5cbd6;letter-spacing:0.68px;">+4 more</div>
<div class="abs" style="left:797px;top:1532px;width:1308px;height:2px;background:#30343c"></div>
<div class="abs" style="left:797px;top:1570px;width:24px;height:24px;background:#1c2a4b;border:2px solid #2f6bef;border-radius:6px"></div>
<div class="t " style="left:833.0px;top:1568.2px;font-size:26px;color:#a9b4c8;letter-spacing:0.20px;">Selected</div>
<div class="abs" style="left:959px;top:1568px;width:28px;height:28px;background:#1b1d24;border:2px solid #ffffff;border-radius:7px;box-shadow:0 0 0 4px #7c3aed"></div>
<div class="t " style="left:997.0px;top:1568.2px;font-size:26px;color:#a9b4c8;letter-spacing:0.15px;">Today</div>
<div class="abs" style="left:1090.6px;top:1570px;width:24px;height:24px;background:#1e4d35;border:2px solid #27893f;border-radius:6px"></div>
<div class="t " style="left:1128.0px;top:1568.2px;font-size:26px;color:#a9b4c8;letter-spacing:1.17px;">High</div>
<div class="abs" style="left:1210px;top:1570px;width:24px;height:24px;background:#48381f;border:2px solid #8b5e1b;border-radius:6px"></div>
<div class="t " style="left:1247.0px;top:1568.2px;font-size:26px;color:#a9b4c8;letter-spacing:0.46px;">Moderate</div>
<svg style="left:1384.7px;top:1569.5px;width:24px;height:24px;color:#e5484d;" viewBox="0 0 24 24" stroke-width="2"><path d="m21.73 18-8-14a2 2 0 0 0-3.48 0l-8 14A2 2 0 0 0 4 21h16a2 2 0 0 0 1.73-3"/><path d="M12 9v4"/><path d="M12 17h.01"/></svg>
<div class="t " style="left:1421.5px;top:1568.2px;font-size:26px;color:#a9b4c8;letter-spacing:0.69px;">Conflict</div>
<div class="abs" style="left:2188px;top:320px;width:732px;height:1430px;background:#1b1d24;border:2px solid #393e49;border-radius:24px"></div>
<div class="t " style="left:2238.0px;top:378.4px;font-size:42px;color:#f8f9fb;font-weight:bold;letter-spacing:-1.67px;-webkit-text-stroke:0.6px currentColor;">Saturday</div>
<div class="t " style="left:2238.0px;top:431.0px;font-size:29px;color:#a9b4c8;letter-spacing:-0.01px;">January 31, 2026</div>
<svg style="left:2822.5px;top:402px;width:32px;height:32px;color:#ffffff;" viewBox="0 0 24 24" stroke-width="2"><path d="M18 6 6 18"/><path d="m6 6 12 12"/></svg>
<div class="abs" style="left:2237px;top:498px;width:200px;height:117px;background:#1f2129;border-radius:24px"></div>
<div class="t " style="left:2327.0px;top:524.5px;font-size:36px;color:#ffffff;font-weight:bold;">6</div>
<div class="t " style="left:2290.5px;top:574.1px;font-size:22px;color:#a9b4c8;letter-spacing:0.36px;">Bookings</div>
<div class="abs" style="left:2453px;top:498px;width:201px;height:117px;background:#1b2b26;border-radius:24px"></div>
<div class="t " style="left:2469.7px;top:524.5px;font-size:36px;color:#22c55e;font-weight:bold;letter-spacing:2.49px;">$279,700</div>
<div class="t " style="left:2510.5px;top:574.1px;font-size:22px;color:#a9b4c8;letter-spacing:-0.35px;">Revenue</div>
<div class="abs" style="left:2670px;top:498px;width:200px;height:117px;background:#1b2236;border-radius:24px"></div>
<div class="t " style="left:2760.0px;top:524.5px;font-size:36px;color:#2563eb;font-weight:bold;">6</div>
<div class="t " style="left:2729.5px;top:574.1px;font-size:22px;color:#a9b4c8;letter-spacing:-0.13px;">Vehicles</div>
<div class="abs" style="left:2840px;top:648px;width:30px;height:1052px;background:#2b2b2b;border-left:2px solid #3d3d3d;border-right:2px solid #3d3d3d"></div>
<div class="abs" style="left:2848px;top:654px;width:16px;height:623px;background:#6b6b6b;border-radius:8px"></div>
<div class="abs" style="left:2230px;top:640px;width:606px;height:1060px;overflow:hidden">
<div class="abs" style="left:7px;top:8px;width:595px;height:268px;background:#1b1d24;border:2px solid #363b45;border-left:8px solid #e11d48;border-radius:24px;overflow:hidden">
<svg style="left:393px;top:0px;width:194px;height:264px;stroke:none" viewBox="0 0 194 264">
<rect width="194" height="264" fill="#2e3035"/>
<ellipse cx="97" cy="72" rx="12" ry="4" fill="#222428"/>
<path d="M50 74 L144 74 Q152 74 156 84 L168 112 L26 112 L38 84 Q42 74 50 74 Z" fill="#24272c"/>
<path d="M0 104 C20 96 40 110 97 110 C154 110 174 96 194 104 L194 172 L0 172 Z" fill="#2b2e33"/>
<path d="M0 120 C30 130 60 140 97 140 C134 140 164 130 194 120 L194 172 L0 172 Z" fill="#272a2f"/>
<rect x="0" y="172" width="194" height="60" fill="#1f2125"/>
<rect x="0" y="232" width="194" height="32" fill="#2a2c31"/>
</svg>
</div>
<svg style="left:39px;top:34px;width:80px;height:80px;stroke:none" viewBox="0 0 80 80">
<defs><linearGradient id="tg34" x1="0" y1="0" x2="0" y2="1"><stop offset="0" stop-color="#f5f6f6"/><stop offset="0.55" stop-color="#e3e7e8"/><stop offset="1" stop-color="#cdd5d8"/></linearGradient>
<linearGradient id="tb34" x1="0" y1="0" x2="0" y2="1"><stop offset="0" stop-color="#7cc3c6"/><stop offset="1" stop-color="#2f6f74"/></linearGradient>
<clipPath id="tc34"><rect x="0" y="0" width="80" height="80" rx="19"/></clipPath></defs>
<g clip-path="url(#tc34)">
<rect width="80" height="80" fill="url(#tg34)"/>
<path d="M28 21 L52 21 L59 34 L21 34 Z" fill="#27333a"/>
<ellipse cx="40" cy="20" rx="3.5" ry="1.8" fill="#101416"/>
<path d="M1 44 C3 36 10 32 20 32 L60 32 C70 32 77 36 79 44 L79 56 L1 56 Z" fill="url(#tb34)"/>
<path d="M4 50 C10 48 20 48 28 48 L52 48 C60 48 70 48 76 50 L78 64 C60 67 20 67 2 64 Z" fill="#0a0c0d"/>
<rect x="3" y="64" width="74" height="3" fill="#3a4143"/>
<path d="M8 25 L15 30 M72 25 L65 30" stroke="#141819" stroke-width="2"/>
</g></svg>
<div class="t " style="left:135.0px;top:44.2px;font-size:29px;color:#ffffff;font-weight:bold;letter-spacing:-1.20px;-webkit-text-stroke:0.4px currentColor;">Aston Martin Valkyrie</div>
<div class="t " style="left:135.0px;top:80.8px;font-size:25px;color:#a9b4c8;letter-spacing:0.96px;">Christopher Mills</div>
<div class="abs" style="left:425.6px;top:34px;width:150px;height:41px;background:#293b36;border:2px solid #354541;border-radius:21px"></div>
<div class="t " style="left:447.9px;top:41.8px;font-size:23px;color:#ffffff;font-weight:bold;letter-spacing:-0.71px;">confirmed</div>
<svg style="left:38.6px;top:133.7px;width:24px;height:24px;color:#a9b4c8;" viewBox="0 0 24 24" stroke-width="2"><circle cx="12" cy="12" r="10"/><polyline points="12 6 12 12 16 14"/></svg>
<div class="t " style="left:70.5px;top:132.5px;font-size:25px;color:#a9b4c8;letter-spacing:0.20px;">10:00 AM</div>
<svg style="left:310px;top:133.7px;width:24px;height:24px;color:#a9b4c8;" viewBox="0 0 24 24" stroke-width="2"><path d="M20 10c0 4.993-5.539 10.193-7.399 11.799a1 1 0 0 1-1.202 0C9.539 20.193 4 14.993 4 10a8 8 0 0 1 16 0"/><circle cx="12" cy="10" r="3"/></svg>
<div class="t " style="left:343.7px;top:132.5px;font-size:25px;color:#a9b4c8;letter-spacing:0.81px;">Scottsdale</div>
<div class="abs" style="left:39px;top:178px;width:537px;height:2px;background-image:linear-gradient(90deg,#3f4450 0 6px,transparent 6px 10px);background-size:10px 2px"></div>
<div class="t " style="left:39.0px;top:205.0px;font-size:36px;color:#22c55e;font-weight:bold;letter-spacing:-0.47px;">$27,500</div>
<svg style="left:404.3px;top:207.5px;width:32px;height:32px;color:#ffffff;" viewBox="0 0 24 24" stroke-width="2"><path d="M22 16.92v3a2 2 0 0 1-2.18 2 19.790 19.79 0 0 1-8.63-3.07 19.5 19.5 0 0 1-6-6 19.79 19.79 0 0 1-3.07-8.67A2 2 0 0 1 4.11 2h3a2 2 0 0 1 2 1.72 12.84 12.84 0 0 0 .7 2.81 2 2 0 0 1-.45 2.11L8.09 9.91a16 16 0 0 0 6 6l1.27-1.27a2 2 0 0 1 2.11-.45 12.84 12.84 0 0 0 2.81.7A2 2 0 0 1 22 16.92z"/></svg>
<svg style="left:468px;top:207.5px;width:32px;height:32px;color:#ffffff;" viewBox="0 0 24 24" stroke-width="2"><rect width="20" height="16" x="2" y="4" rx="2"/><path d="m22 7-8.97 5.7a1.94 1.94 0 0 1-2.06 0L2 7"/></svg>
<svg style="left:532px;top:207.5px;width:32px;height:32px;color:#ffffff;" viewBox="0 0 24 24" stroke-width="2"><path d="M15 3h6v6"/><path d="M10 14 21 3"/><path d="M18 13v6a2 2 0 0 1-2 2H5a2 2 0 0 1-2-2V8a2 2 0 0 1 2-2h6"/></svg>
<div class="abs" style="left:7px;top:302.29999999999995px;width:595px;height:268px;background:#1b1d24;border:2px solid #363b45;border-left:8px solid #2563eb;border-radius:24px;overflow:hidden">
<svg style="left:393px;top:0px;width:194px;height:264px;stroke:none" viewBox="0 0 194 264">
<rect width="194" height="264" fill="#2e3035"/>
<ellipse cx="97" cy="72" rx="12" ry="4" fill="#222428"/>
<path d="M50 74 L144 74 Q152 74 156 84 L168 112 L26 112 L38 84 Q42 74 50 74 Z" fill="#24272c"/>
<path d="M0 104 C20 96 40 110 97 110 C154 110 174 96 194 104 L194 172 L0 172 Z" fill="#2b2e33"/>
<path d="M0 120 C30 130 60 140 97 140 C134 140 164 130 194 120 L194 172 L0 172 Z" fill="#272a2f"/>
<rect x="0" y="172" width="194" height="60" fill="#1f2125"/>
<rect x="0" y="232" width="194" height="32" fill="#2a2c31"/>
</svg>
</div>
<svg style="left:39px;top:328.29999999999995px;width:80px;height:80px;stroke:none" viewBox="0 0 80 80">
<defs><linearGradient id="tg328" x1="0" y1="0" x2="0" y2="1"><stop offset="0" stop-color="#f5f6f6"/><stop offset="0.55" stop-color="#e3e7e8"/><stop offset="1" stop-color="#cdd5d8"/></linearGradient>
<linearGradient id="tb328" x1="0" y1="0" x2="0" y2="1"><stop offset="0" stop-color="#6fb2c2"/><stop offset="1" stop-color="#2a6476"/></linearGradient>
<clipPath id="tc328"><rect x="0" y="0" width="80" height="80" rx="19"/></clipPath></defs>
<g clip-path="url(#tc328)">
<rect width="80" height="80" fill="url(#tg328)"/>
<path d="M28 21 L52 21 L59 34 L21 34 Z" fill="#27333a"/>
<ellipse cx="40" cy="20" rx="3.5" ry="1.8" fill="#101416"/>
<path d="M1 44 C3 36 10 32 20 32 L60 32 C70 32 77 36 79 44 L79 56 L1 56 Z" fill="url(#tb328)"/>
<path d="M4 50 C10 48 20 48 28 48 L52 48 C60 48 70 48 76 50 L78 64 C60 67 20 67 2 64 Z" fill="#0a0c0d"/>
<rect x="3" y="64" width="74" height="3" fill="#3a4143"/>
<path d="M8 25 L15 30 M72 25 L65 30" stroke="#141819" stroke-width="2"/>
</g></svg>
<div class="t " style="left:135.0px;top:338.5px;font-size:29px;color:#ffffff;font-weight:bold;letter-spacing:-1.47px;-webkit-text-stroke:0.4px currentColor;">Pagani Huayra</div>
<div class="t " style="left:135.0px;top:375.1px;font-size:25px;color:#a9b4c8;letter-spacing:0.72px;">Natasha Volkov</div>
<div class="abs" style="left:425.6px;top:328.29999999999995px;width:150px;height:41px;background:#293b36;border:2px solid #354541;border-radius:21px"></div>
<div class="t " style="left:447.9px;top:336.1px;font-size:23px;color:#ffffff;font-weight:bold;letter-spacing:-0.71px;">confirmed</div>
<svg style="left:38.6px;top:427.99999999999994px;width:24px;height:24px;color:#a9b4c8;" viewBox="0 0 24 24" stroke-width="2"><circle cx="12" cy="12" r="10"/><polyline points="12 6 12 12 16 14"/></svg>
<div class="t " style="left:70.5px;top:426.8px;font-size:25px;color:#a9b4c8;letter-spacing:0.20px;">10:00 AM</div>
<svg style="left:310px;top:427.99999999999994px;width:24px;height:24px;color:#a9b4c8;" viewBox="0 0 24 24" stroke-width="2"><path d="M20 10c0 4.993-5.539 10.193-7.399 11.799a1 1 0 0 1-1.202 0C9.539 20.193 4 14.993 4 10a8 8 0 0 1 16 0"/><circle cx="12" cy="10" r="3"/></svg>
<div class="t " style="left:343.7px;top:426.8px;font-size:25px;color:#a9b4c8;letter-spacing:0.81px;">Scottsdale</div>
<div class="abs" style="left:39px;top:472.29999999999995px;width:537px;height:2px;background-image:linear-gradient(90deg,#3f4450 0 6px,transparent 6px 10px);background-size:10px 2px"></div>
<div class="t " style="left:39.0px;top:499.3px;font-size:36px;color:#22c55e;font-weight:bold;letter-spacing:-0.05px;">$35,000</div>
<svg style="left:404.3px;top:501.79999999999995px;width:32px;height:32px;color:#ffffff;" viewBox="0 0 24 24" stroke-width="2"><path d="M22 16.92v3a2 2 0 0 1-2.18 2 19.790 19.79 0 0 1-8.63-3.07 19.5 19.5 0 0 1-6-6 19.79 19.79 0 0 1-3.07-8.67A2 2 0 0 1 4.11 2h3a2 2 0 0 1 2 1.72 12.84 12.84 0 0 0 .7 2.81 2 2 0 0 1-.45 2.11L8.09 9.91a16 16 0 0 0 6 6l1.27-1.27a2 2 0 0 1 2.11-.45 12.84 12.84 0 0 0 2.81.7A2 2 0 0 1 22 16.92z"/></svg>
<svg style="left:468px;top:501.79999999999995px;width:32px;height:32px;color:#ffffff;" viewBox="0 0 24 24" stroke-width="2"><rect width="20" height="16" x="2" y="4" rx="2"/><path d="m22 7-8.97 5.7a1.94 1.94 0 0 1-2.06 0L2 7"/></svg>
<svg style="left:532px;top:501.79999999999995px;width:32px;height:32px;color:#ffffff;" viewBox="0 0 24 24" stroke-width="2"><path d="M15 3h6v6"/><path d="M10 14 21 3"/><path d="M18 13v6a2 2 0 0 1-2 2H5a2 2 0 0 1-2-2V8a2 2 0 0 1 2-2h6"/></svg>
<div class="abs" style="left:7px;top:596.5999999999999px;width:595px;height:268px;background:#1b1d24;border:2px solid #363b45;border-left:8px solid #22c55e;border-radius:24px;overflow:hidden">
<svg style="left:393px;top:0px;width:194px;height:264px;stroke:none" viewBox="0 0 194 264">
<rect width="194" height="264" fill="#2e3035"/>
<ellipse cx="97" cy="72" rx="12" ry="4" fill="#222428"/>
<path d="M50 74 L144 74 Q152 74 156 84 L168 112 L26 112 L38 84 Q42 74 50 74 Z" fill="#24272c"/>
<path d="M0 104 C20 96 40 110 97 110 C154 110 174 96 194 104 L194 172 L0 172 Z" fill="#2b2e33"/>
<path d="M0 120 C30 130 60 140 97 140 C134 140 164 130 194 120 L194 172 L0 172 Z" fill="#272a2f"/>
<rect x="0" y="172" width="194" height="60" fill="#1f2125"/>
<rect x="0" y="232" width="194" height="32" fill="#2a2c31"/>
</svg>
</div>
<svg style="left:39px;top:622.5999999999999px;width:80px;height:80px;stroke:none" viewBox="0 0 80 80">
<defs><linearGradient id="tg622" x1="0" y1="0" x2="0" y2="1"><stop offset="0" stop-color="#f5f6f6"/><stop offset="0.55" stop-color="#e3e7e8"/><stop offset="1" stop-color="#cdd5d8"/></linearGradient>
<linearGradient id="tb622" x1="0" y1="0" x2="0" y2="1"><stop offset="0" stop-color="#6aa9a8"/><stop offset="1" stop-color="#2b5e60"/></linearGradient>
<clipPath id="tc622"><rect x="0" y="0" width="80" height="80" rx="19"/></clipPath></defs>
<g clip-path="url(#tc622)">
<rect width="80" height="80" fill="url(#tg622)"/>
<path d="M28 21 L52 21 L59 34 L21 34 Z" fill="#27333a"/>
<ellipse cx="40" cy="20" rx="3.5" ry="1.8" fill="#101416"/>
<path d="M1 44 C3 36 10 32 20 32 L60 32 C70 32 77 36 79 44 L79 56 L1 56 Z" fill="url(#tb622)"/>
<path d="M4 50 C10 48 20 48 28 48 L52 48 C60 48 70 48 76 50 L78 64 C60 67 20 67 2 64 Z" fill="#0a0c0d"/>
<rect x="3" y="64" width="74" height="3" fill="#3a4143"/>
<path d="M8 25 L15 30 M72 25 L65 30" stroke="#141819" stroke-width="2"/>
</g></svg>
<div class="t " style="left:135.0px;top:632.8px;font-size:29px;color:#ffffff;font-weight:bold;letter-spacing:-1.55px;-webkit-text-stroke:0.4px currentColor;">Koenigsegg Jesko</div>
<div class="t " style="left:135.0px;top:669.4px;font-size:25px;color:#a9b4c8;letter-spacing:0.68px;">Victoria Hayes</div>
<div class="abs" style="left:425.6px;top:622.5999999999999px;width:150px;height:41px;background:#293b36;border:2px solid #354541;border-radius:21px"></div>
<div class="t " style="left:447.9px;top:630.4px;font-size:23px;color:#ffffff;font-weight:bold;letter-spacing:-0.71px;">confirmed</div>
<svg style="left:38.6px;top:722.3px;width:24px;height:24px;color:#a9b4c8;" viewBox="0 0 24 24" stroke-width="2"><circle cx="12" cy="12" r="10"/><polyline points="12 6 12 12 16 14"/></svg>
<div class="t " style="left:70.5px;top:721.1px;font-size:25px;color:#a9b4c8;letter-spacing:0.20px;">10:00 AM</div>
<svg style="left:310px;top:722.3px;width:24px;height:24px;color:#a9b4c8;" viewBox="0 0 24 24" stroke-width="2"><path d="M20 10c0 4.993-5.539 10.193-7.399 11.799a1 1 0 0 1-1.202 0C9.539 20.193 4 14.993 4 10a8 8 0 0 1 16 0"/><circle cx="12" cy="10" r="3"/></svg>
<div class="t " style="left:343.7px;top:721.1px;font-size:25px;color:#a9b4c8;letter-spacing:0.81px;">Scottsdale</div>
<div class="abs" style="left:39px;top:766.5999999999999px;width:537px;height:2px;background-image:linear-gradient(90deg,#3f4450 0 6px,transparent 6px 10px);background-size:10px 2px"></div>
<div class="t " style="left:39.0px;top:793.6px;font-size:36px;color:#22c55e;font-weight:bold;letter-spacing:0.65px;">$42,000</div>
<svg style="left:404.3px;top:796.0999999999999px;width:32px;height:32px;color:#ffffff;" viewBox="0 0 24 24" stroke-width="2"><path d="M22 16.92v3a2 2 0 0 1-2.18 2 19.790 19.79 0 0 1-8.63-3.07 19.5 19.5 0 0 1-6-6 19.79 19.79 0 0 1-3.07-8.67A2 2 0 0 1 4.11 2h3a2 2 0 0 1 2 1.72 12.84 12.84 0 0 0 .7 2.81 2 2 0 0 1-.45 2.11L8.09 9.91a16 16 0 0 0 6 6l1.27-1.27a2 2 0 0 1 2.11-.45 12.84 12.84 0 0 0 2.81.7A2 2 0 0 1 22 16.92z"/></svg>
<svg style="left:468px;top:796.0999999999999px;width:32px;height:32px;color:#ffffff;" viewBox="0 0 24 24" stroke-width="2"><rect width="20" height="16" x="2" y="4" rx="2"/><path d="m22 7-8.97 5.7a1.94 1.94 0 0 1-2.06 0L2 7"/></svg>
<svg style="left:532px;top:796.0999999999999px;width:32px;height:32px;color:#ffffff;" viewBox="0 0 24 24" stroke-width="2"><path d="M15 3h6v6"/><path d="M10 14 21 3"/><path d="M18 13v6a2 2 0 0 1-2 2H5a2 2 0 0 1-2-2V8a2 2 0 0 1 2-2h6"/></svg>
<div class="abs" style="left:7px;top:890.5999999999999px;width:595px;height:268px;background:#1b1d24;border:2px solid #363b45;border-left:8px solid #2563eb;border-radius:24px;overflow:hidden">
<svg style="left:393px;top:0px;width:194px;height:264px;stroke:none" viewBox="0 0 194 264">
<rect width="194" height="264" fill="#2e3035"/>
<ellipse cx="97" cy="72" rx="12" ry="4" fill="#222428"/>
<path d="M50 74 L144 74 Q152 74 156 84 L168 112 L26 112 L38 84 Q42 74 50 74 Z" fill="#24272c"/>
<path d="M0 104 C20 96 40 110 97 110 C154 110 174 96 194 104 L194 172 L0 172 Z" fill="#2b2e33"/>
<path d="M0 120 C30 130 60 140 97 140 C134 140 164 130 194 120 L194 172 L0 172 Z" fill="#272a2f"/>
<rect x="0" y="172" width="194" height="60" fill="#1f2125"/>
<rect x="0" y="232" width="194" height="32" fill="#2a2c31"/>
</svg>
</div>
<svg style="left:39px;top:916.5999999999999px;width:80px;height:80px;stroke:none" viewBox="0 0 80 80">
<defs><linearGradient id="tg916" x1="0" y1="0" x2="0" y2="1"><stop offset="0" stop-color="#f5f6f6"/><stop offset="0.55" stop-color="#e3e7e8"/><stop offset="1" stop-color="#cdd5d8"/></linearGradient>
<linearGradient id="tb916" x1="0" y1="0" x2="0" y2="1"><stop offset="0" stop-color="#c9cdcf"/><stop offset="1" stop-color="#6d7275"/></linearGradient>
<clipPath id="tc916"><rect x="0" y="0" width="80" height="80" rx="19"/></clipPath></defs>
<g clip-path="url(#tc916)">
<rect width="80" height="80" fill="url(#tg916)"/>
<path d="M28 21 L52 21 L59 34 L21 34 Z" fill="#27333a"/>
<ellipse cx="40" cy="20" rx="3.5" ry="1.8" fill="#101416"/>
<path d="M1 44 C3 36 10 32 20 32 L60 32 C70 32 77 36 79 44 L79 56 L1 56 Z" fill="url(#tb916)"/>
<path d="M4 50 C10 48 20 48 28 48 L52 48 C60 48 70 48 76 50 L78 64 C60 67 20 67 2 64 Z" fill="#0a0c0d"/>
<rect x="3" y="64" width="74" height="3" fill="#3a4143"/>
<path d="M8 25 L15 30 M72 25 L65 30" stroke="#141819" stroke-width="2"/>
</g></svg>
<div class="t " style="left:135.0px;top:926.8px;font-size:29px;color:#ffffff;font-weight:bold;letter-spacing:-0.94px;-webkit-text-stroke:0.4px currentColor;">Mercedes-AMG One</div>
<div class="t " style="left:135.0px;top:963.4px;font-size:25px;color:#a9b4c8;letter-spacing:0.95px;">Marcus Wellington III</div>
<div class="abs" style="left:425.6px;top:916.5999999999999px;width:150px;height:41px;background:#293b36;border:2px solid #354541;border-radius:21px"></div>
<div class="t " style="left:447.9px;top:924.4px;font-size:23px;color:#ffffff;font-weight:bold;letter-spacing:-0.71px;">confirmed</div>
<svg style="left:38.6px;top:1016.3px;width:24px;height:24px;color:#a9b4c8;" viewBox="0 0 24 24" stroke-width="2"><circle cx="12" cy="12" r="10"/><polyline points="12 6 12 12 16 14"/></svg>
<div class="t " style="left:70.5px;top:1015.1px;font-size:25px;color:#a9b4c8;letter-spacing:0.20px;">10:00 AM</div>
<svg style="left:310px;top:1016.3px;width:24px;height:24px;color:#a9b4c8;" viewBox="0 0 24 24" stroke-width="2"><path d="M20 10c0 4.993-5.539 10.193-7.399 11.799a1 1 0 0 1-1.202 0C9.539 20.193 4 14.993 4 10a8 8 0 0 1 16 0"/><circle cx="12" cy="10" r="3"/></svg>
<div class="t " style="left:343.7px;top:1015.1px;font-size:25px;color:#a9b4c8;letter-spacing:0.81px;">Scottsdale</div>
<div class="abs" style="left:39px;top:1060.6px;width:537px;height:2px;background-image:linear-gradient(90deg,#3f4450 0 6px,transparent 6px 10px);background-size:10px 2px"></div>
<svg style="left:404.3px;top:1090.1px;width:32px;height:32px;color:#ffffff;" viewBox="0 0 24 24" stroke-width="2"><path d="M22 16.92v3a2 2 0 0 1-2.18 2 19.790 19.79 0 0 1-8.63-3.07 19.5 19.5 0 0 1-6-6 19.79 19.79 0 0 1-3.07-8.67A2 2 0 0 1 4.11 2h3a2 2 0 0 1 2 1.72 12.84 12.84 0 0 0 .7 2.81 2 2 0 0 1-.45 2.11L8.09 9.91a16 16 0 0 0 6 6l1.27-1.27a2 2 0 0 1 2.11-.45 12.84 12.84 0 0 0 2.81.7A2 2 0 0 1 22 16.92z"/></svg>
<svg style="left:468px;top:1090.1px;width:32px;height:32px;color:#ffffff;" viewBox="0 0 24 24" stroke-width="2"><rect width="20" height="16" x="2" y="4" rx="2"/><path d="m22 7-8.97 5.7a1.94 1.94 0 0 1-2.06 0L2 7"/></svg>
<svg style="left:532px;top:1090.1px;width:32px;height:32px;color:#ffffff;" viewBox="0 0 24 24" stroke-width="2"><path d="M15 3h6v6"/><path d="M10 14 21 3"/><path d="M18 13v6a2 2 0 0 1-2 2H5a2 2 0 0 1-2-2V8a2 2 0 0 1 2-2h6"/></svg>
</div>
</body></html>
